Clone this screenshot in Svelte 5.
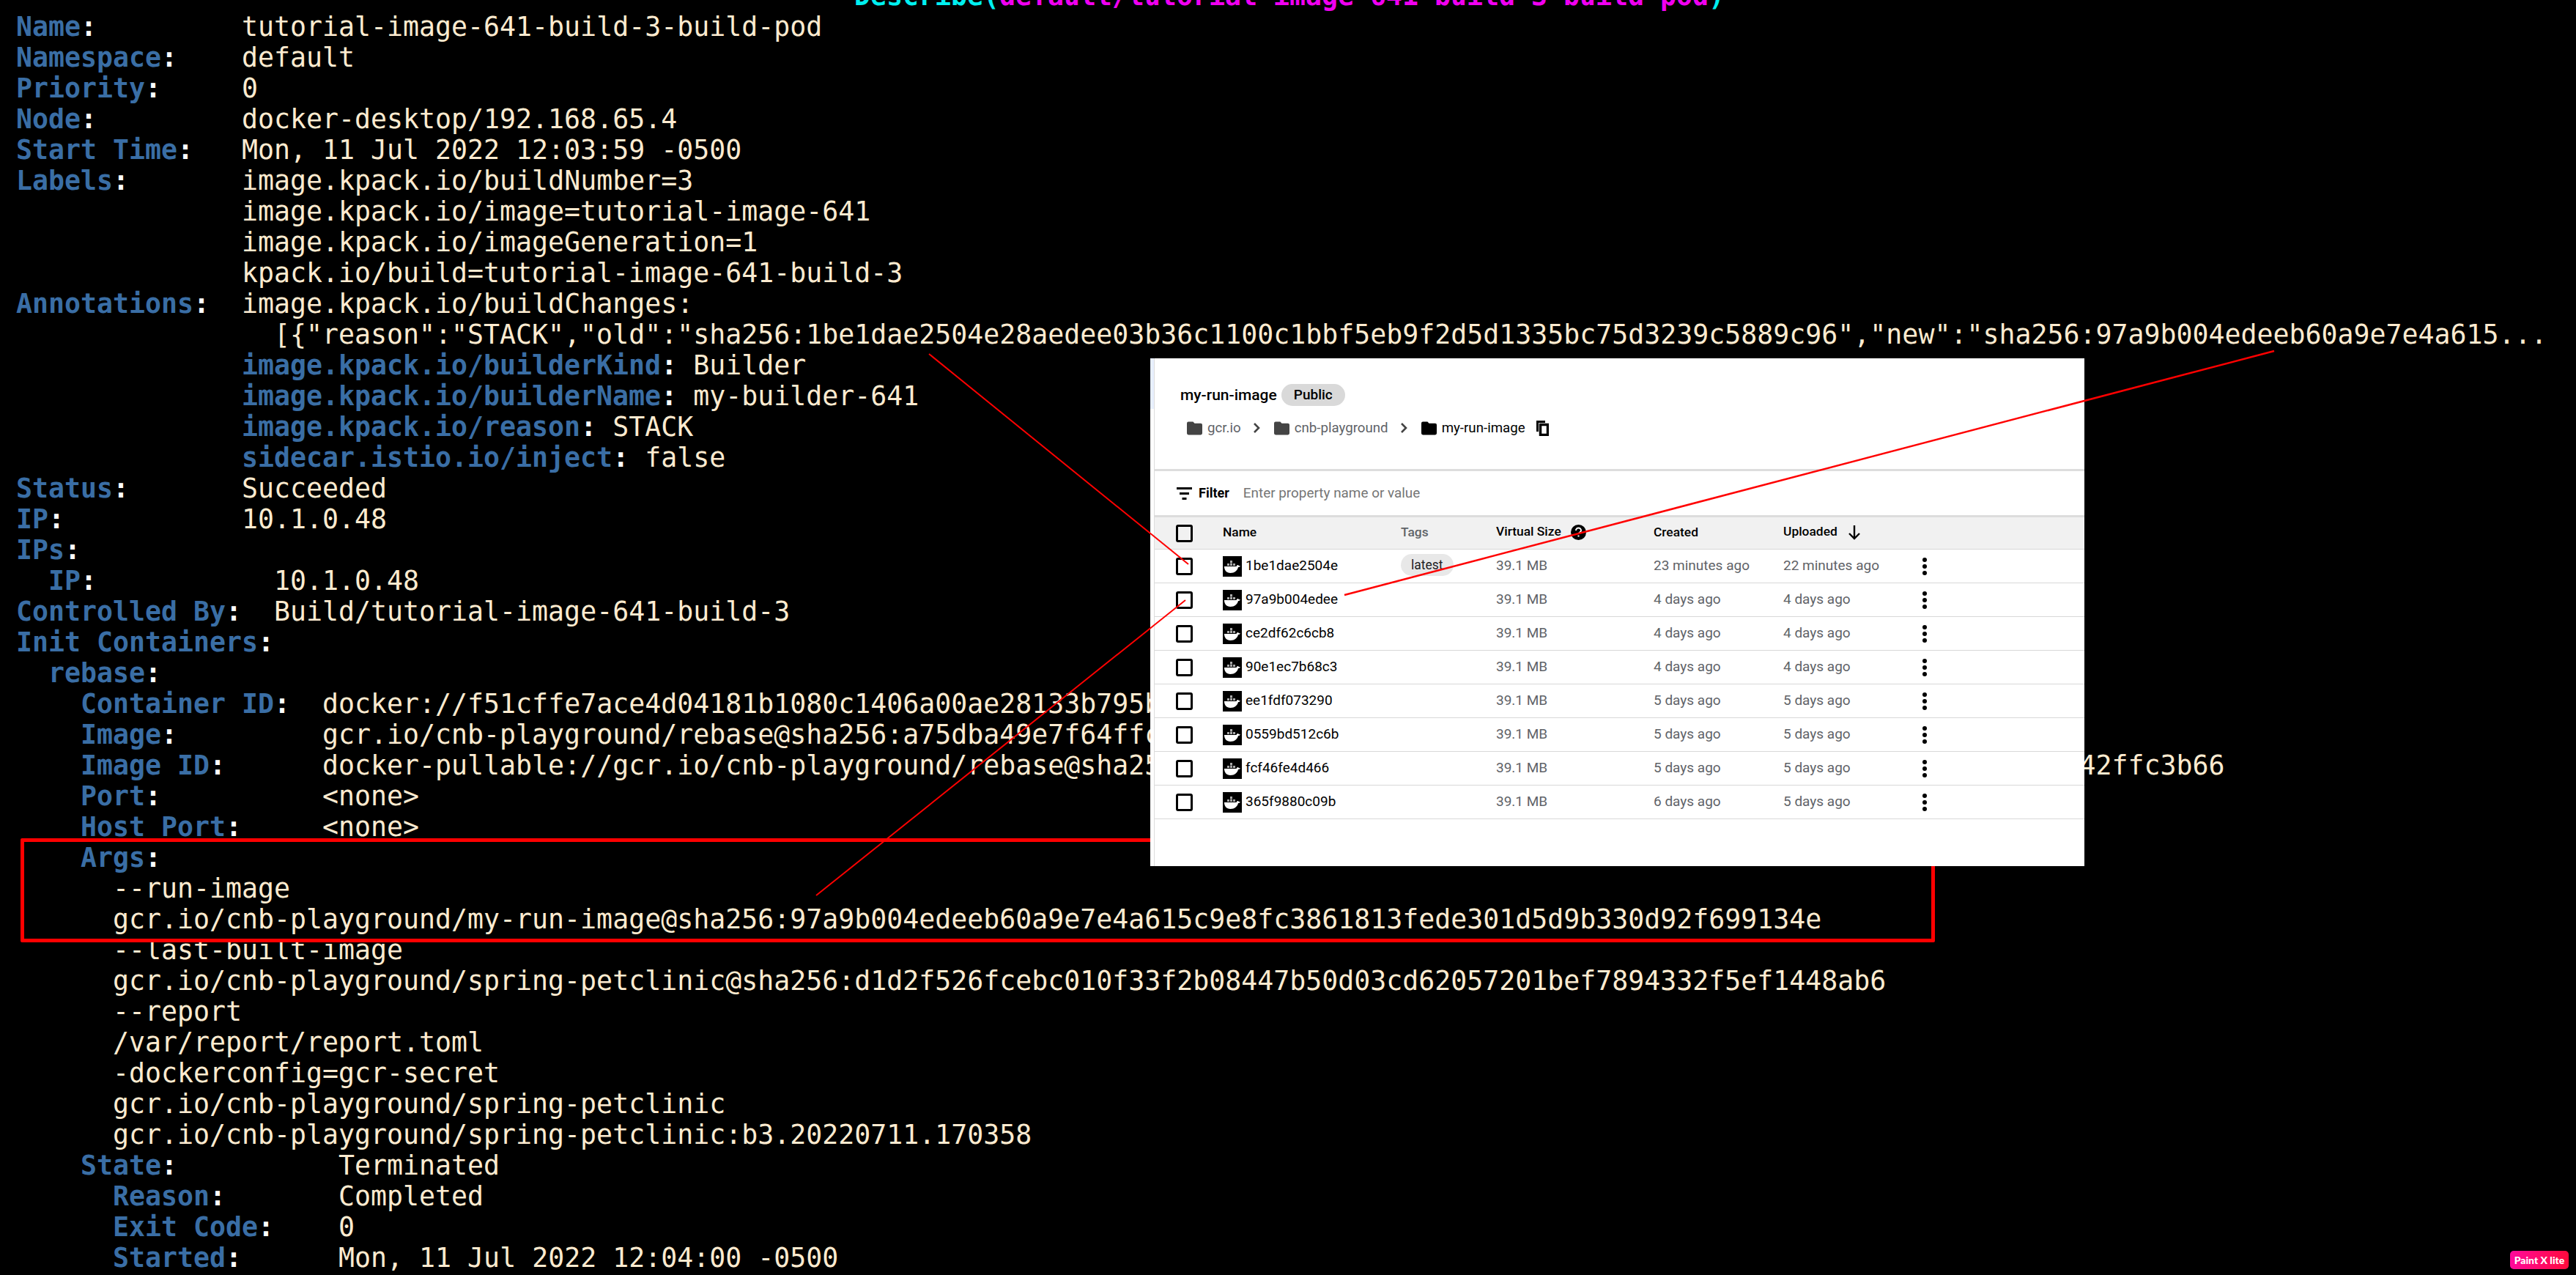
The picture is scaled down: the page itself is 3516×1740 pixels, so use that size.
<script>
  const pad = (n) => ' '.repeat(n);

  // key is drawn blue, the rest in the terminal foreground
  const lines = [
    { key: 'Name', rest: '         tutorial-image-641-build-3-build-pod' },
    { key: 'Namespace', rest: '    default' },
    { key: 'Priority', rest: '     0' },
    { key: 'Node', rest: '         docker-desktop/192.168.65.4' },
    { key: 'Start Time', rest: '   Mon, 11 Jul 2022 12:03:59 -0500' },
    { key: 'Labels', rest: '       image.kpack.io/buildNumber=3' },
    { pre: pad(14), rest: 'image.kpack.io/image=tutorial-image-641' },
    { pre: pad(14), rest: 'image.kpack.io/imageGeneration=1' },
    { pre: pad(14), rest: 'kpack.io/build=tutorial-image-641-build-3' },
    { key: 'Annotations', rest: '  image.kpack.io/buildChanges:' },
    { pre: pad(16), rest: '[{"reason":"STACK","old":"sha256:1be1dae2504e28aedee03b36c1100c1bbf5eb9f2d5d1335bc75d3239c5889c96","new":"sha256:97a9b004edeeb60a9e7e4a615...' },
    { pre: pad(14), key: 'image.kpack.io/builderKind', rest: ' Builder' },
    { pre: pad(14), key: 'image.kpack.io/builderName', rest: ' my-builder-641' },
    { pre: pad(14), key: 'image.kpack.io/reason', rest: ' STACK' },
    { pre: pad(14), key: 'sidecar.istio.io/inject', rest: ' false' },
    { key: 'Status', rest: '       Succeeded' },
    { key: 'IP', rest: '           10.1.0.48' },
    { key: 'IPs', rest: '' },
    { pre: pad(2), key: 'IP', rest: '           10.1.0.48' },
    { key: 'Controlled By', rest: '  Build/tutorial-image-641-build-3' },
    { key: 'Init Containers', rest: '' },
    { pre: pad(2), key: 'rebase', rest: '' },
    { pre: pad(4), key: 'Container ID', rest: '  docker://f51cffe7ace4d04181b1080c1406a00ae28133b795b1c6f0a2d8e47b93c05d1e' },
    { pre: pad(4), key: 'Image', rest: '         gcr.io/cnb-playground/rebase@sha256:a75dba49e7f64ffc3b66d1a8f7e20c4942ffc3b66' },
    { pre: pad(4), key: 'Image ID', rest: '      docker-pullable://gcr.io/cnb-playground/rebase@sha256:a75dba49e7f64ffc0d93b1e7a6c25f8e04d7b31c9a68e1f5d2c7b4042ffc3b66' },
    { pre: pad(4), key: 'Port', rest: '          <none>' },
    { pre: pad(4), key: 'Host Port', rest: '     <none>' },
    { pre: pad(4), key: 'Args', rest: '' },
    { pre: pad(6), rest: '--run-image' },
    { pre: pad(6), rest: 'gcr.io/cnb-playground/my-run-image@sha256:97a9b004edeeb60a9e7e4a615c9e8fc3861813fede301d5d9b330d92f699134e' },
    { pre: pad(6), rest: '--last-built-image' },
    { pre: pad(6), rest: 'gcr.io/cnb-playground/spring-petclinic@sha256:d1d2f526fcebc010f33f2b08447b50d03cd62057201bef7894332f5ef1448ab6' },
    { pre: pad(6), rest: '--report' },
    { pre: pad(6), rest: '/var/report/report.toml' },
    { pre: pad(6), rest: '-dockerconfig=gcr-secret' },
    { pre: pad(6), rest: 'gcr.io/cnb-playground/spring-petclinic' },
    { pre: pad(6), rest: 'gcr.io/cnb-playground/spring-petclinic:b3.20220711.170358' },
    { pre: pad(4), key: 'State', rest: '          Terminated' },
    { pre: pad(6), key: 'Reason', rest: '       Completed' },
    { pre: pad(6), key: 'Exit Code', rest: '    0' },
    { pre: pad(6), key: 'Started', rest: '      Mon, 11 Jul 2022 12:04:00 -0500' }
  ];

  const images = [
    { name: '1be1dae2504e', tag: 'latest', created: '23 minutes ago', uploaded: '22 minutes ago' },
    { name: '97a9b004edee', created: '4 days ago', uploaded: '4 days ago' },
    { name: 'ce2df62c6cb8', created: '4 days ago', uploaded: '4 days ago' },
    { name: '90e1ec7b68c3', created: '4 days ago', uploaded: '4 days ago' },
    { name: 'ee1fdf073290', created: '5 days ago', uploaded: '5 days ago' },
    { name: '0559bd512c6b', created: '5 days ago', uploaded: '5 days ago' },
    { name: 'fcf46fe4d466', created: '5 days ago', uploaded: '5 days ago' },
    { name: '365f9880c09b', created: '6 days ago', uploaded: '5 days ago' }
  ];

  const folder = 'M2 5a2 2 0 0 1 2-2h6l2 2h8a2 2 0 0 1 2 2v11a2 2 0 0 1-2 2H4a2 2 0 0 1-2-2z';
</script>

<div class="screen">
  <div class="terminal">
    <div class="title"><span class="cyan">Describe(</span><span class="magenta">default/tutorial-image-641-build-3-build-pod</span><span class="cyan">)</span></div>
    {#each lines as line}
      <div class="line">{line.pre ?? ''}{#if line.key}<span class="key">{line.key}</span><span class="colon">:</span>{/if}{line.rest}</div>
    {/each}
  </div>

  <div class="callout"></div>

  <div class="panel">
    <div class="heading">
      <span class="repo">my-run-image</span>
      <span class="public">Public</span>
    </div>
    <div class="crumbs">
      <svg class="folder" viewBox="2 3 20 17"><path d={folder} fill="#444" /></svg>
      <span class="crumb">gcr.io</span>
      <svg class="chev" viewBox="0 0 10 14"><path d="M2 1l6 6-6 6" fill="none" stroke="#444" stroke-width="2.6" /></svg>
      <svg class="folder" viewBox="2 3 20 17"><path d={folder} fill="#444" /></svg>
      <span class="crumb">cnb-playground</span>
      <svg class="chev" viewBox="0 0 10 14"><path d="M2 1l6 6-6 6" fill="none" stroke="#444" stroke-width="2.6" /></svg>
      <svg class="folder" viewBox="2 3 20 17"><path d={folder} fill="#000" /></svg>
      <span class="crumb current">my-run-image</span>
      <svg class="copy" viewBox="0 0 17 21">
        <path d="M1.500 15V1.500H12" fill="none" stroke="#000" stroke-width="3" />
        <rect x="5.500" y="5.500" width="10" height="14" fill="none" stroke="#000" stroke-width="3.500" />
      </svg>
    </div>
    <div class="filter">
      <svg class="lines" viewBox="0 0 21 17">
        <path d="M0 1.500h21M4 8.500h13M7.500 15.500h6" stroke="#000" stroke-width="3" />
      </svg>
      <span class="filter-label">Filter</span>
      <span class="placeholder">Enter property name or value</span>
    </div>
    <div class="row head">
      <span class="box"></span>
      <span class="c-name">Name</span>
      <span class="c-tags muted">Tags</span>
      <span class="c-size">Virtual Size
        <svg class="help" viewBox="0 0 21 21">
          <circle cx="10.500" cy="10.500" r="10.500" fill="#000" />
          <path d="M7 8a3.500 3.500 0 0 1 7 0c0 2.500-3.500 2.500-3.500 5" fill="none" stroke="#fff" stroke-width="2" />
          <rect x="9.500" y="14.500" width="2" height="2" fill="#fff" />
        </svg>
      </span>
      <span class="c-date">Created</span>
      <span class="c-up">Uploaded
        <svg class="sort" viewBox="0 0 18 20">
          <path d="M9 0v18M2 11l7 7 7-7" fill="none" stroke="#000" stroke-width="2.400" />
        </svg>
      </span>
    </div>
    {#each images as image}
      <div class="row">
        <span class="box"></span>
        <span class="c-name name">
          <svg class="whale" viewBox="0 0 26 28">
            <rect width="26" height="28" fill="#000" />
            <path d="M2 14h16.500c.5-1.500 1.500-2.200 2.500-2 .3 1 1.500 1.300 3 1.200-.5 1.300-1.700 1.800-3 1.800C20 19.500 16 23 10.500 23 5 23 2 19 2 14z" fill="#fff" />
            <path d="M6 10h3v3H6zM10 10h3v3h-3zM14 10h3v3h-3zM10 6h3v3.400h-3z" fill="#aaa" />
          </svg>
          {image.name}
        </span>
        <span class="c-tags">
          {#if image.tag}<span class="tag">{image.tag}</span>{/if}
        </span>
        <span class="c-size muted">39.1 MB</span>
        <span class="c-date muted">{image.created}</span>
        <span class="c-up muted">{image.uploaded}</span>
        <span class="dots"><i></i><i></i><i></i></span>
      </div>
    {/each}
  </div>

  <svg class="arrows" viewBox="0 0 3516 1740">
    <line x1="1268" y1="483" x2="1622" y2="770" stroke-width="2" />
    <line x1="1835" y1="812" x2="3104" y2="479" stroke-width="2.500" />
    <line x1="1114" y1="1222" x2="1618" y2="819" stroke-width="2" />
  </svg>

  <div class="badge">Paint X lite</div>
</div>

<style>
  :global(body) {
    background: #000;
  }

  .screen {
    position: relative;
    width: 3516px;
    height: 1740px;
    overflow: hidden;
    background: #000;
  }

  .terminal {
    margin-top: -26px;
    padding-left: 22px;
    font-family: "DejaVu Sans Mono", monospace;
    font-size: 36.55px;
    line-height: 42px;
    color: #fdebd0;
  }

  .line {
    white-space: pre;
    height: 42px;
  }

  .key {
    color: #3a6ea5;
    font-weight: 700;
  }

  .colon {
    color: #fff;
    font-weight: 700;
  }

  .title {
    text-align: center;
    height: 42px;
    padding-right: 18px;
    font-weight: 700;
    white-space: pre;
  }

  .cyan { color: #00f0f0; }
  .magenta { color: #f000f0; }

  .callout {
    position: absolute;
    left: 28px;
    top: 1144px;
    width: 2613px;
    height: 142px;
    box-sizing: border-box;
    border: 5px solid #f00;
    border-radius: 2px;
  }

  .panel {
    position: absolute;
    left: 1570px;
    top: 489px;
    width: 1275px;
    height: 693px;
    background: #fff;
    font-family: Roboto, sans-serif;
    color: #000;
  }

  .panel::before {
    content: "";
    position: absolute;
    left: 5px;
    top: 0;
    bottom: 0;
    width: 1px;
    background: #ddd;
  }

  .panel::after {
    content: "";
    position: absolute;
    left: 0;
    top: 0;
    width: 5px;
    height: 69px;
    background: #e8f0fe;
  }

  .heading {
    display: flex;
    align-items: center;
    gap: 6px;
    height: 30px;
    padding: 35px 0 0 41px;
  }

  .repo {
    font-size: 21px;
    font-weight: 500;
  }

  .public {
    background: #d9d9d9;
    border-radius: 15px;
    padding: 0 17px;
    height: 30px;
    line-height: 30px;
    font-size: 19px;
    font-weight: 500;
  }

  .crumbs {
    display: flex;
    align-items: center;
    height: 30px;
    margin-top: 15px;
    padding-left: 50px;
    font-size: 18.7px;
    color: #5f6368;
  }

  .folder {
    width: 21px;
    height: 19px;
    margin-right: 7px;
  }

  .chev {
    width: 10px;
    height: 14px;
    margin: 0 19px 0 16px;
  }

  .current {
    color: #000;
  }

  .copy {
    width: 17px;
    height: 21px;
    margin-left: 15px;
  }

  .filter {
    display: flex;
    align-items: center;
    margin-top: 41px;
    margin-left: 6px;
    height: 60px;
    padding-left: 30px;
    border-top: 3px solid #ddd;
    font-size: 18px;
  }

  .lines {
    width: 21px;
    height: 17px;
    margin-right: 9px;
  }

  .filter-label {
    font-weight: 700;
    margin-right: 19px;
    margin-top: -1px;
  }

  .placeholder {
    color: #757575;
    font-size: 18.9px;
    margin-top: -1px;
  }

  .row {
    display: flex;
    align-items: center;
    position: relative;
    height: 45px;
    margin-left: 6px;
    border-bottom: 1px solid #d8d8d8;
    font-size: 19px;
  }

  .head {
    height: 43px;
    background: #f1f1f1;
    border-top: 3px solid #ddd;
    font-weight: 500;
    font-size: 17.4px;
  }

  .box {
    position: absolute;
    left: 29px;
    width: 23px;
    height: 24px;
    box-sizing: border-box;
    border: 3.500px solid #000;
    border-radius: 3px;
    background: transparent;
  }

  .row > span:not(.box):not(.dots) {
    position: absolute;
    margin-top: -3px;
  }

  .c-name { left: 93px; }
  .c-tags { left: 336px; }
  .c-size { left: 466px; }
  .c-date { left: 681px; }
  .c-up { left: 858px; }

  .name {
    display: flex;
    align-items: center;
    gap: 5px;
  }

  .whale {
    width: 26px;
    height: 28px;
    margin-top: 3px;
    flex: none;
  }

  .tag {
    display: block;
    background: #e8e8e8;
    border-radius: 15px;
    height: 30px;
    line-height: 30px;
    padding: 0 14px;
    color: #202124;
    font-size: 17.5px;
  }

  .muted {
    color: #5f6368;
  }

  .help {
    width: 21px;
    height: 21px;
    margin-left: 9px;
    vertical-align: middle;
  }

  .sort {
    width: 18px;
    height: 20px;
    margin-left: 10px;
    vertical-align: middle;
  }

  .dots {
    position: absolute;
    left: 1048px;
    display: flex;
    flex-direction: column;
    gap: 3px;
  }

  .dots i {
    display: block;
    width: 6px;
    height: 6px;
    border-radius: 50%;
    background: #000;
  }

  .arrows {
    position: absolute;
    inset: 0;
    width: 3516px;
    height: 1740px;
    stroke: #f00;
    pointer-events: none;
  }

  .badge {
    position: absolute;
    left: 3426px;
    top: 1707px;
    width: 80px;
    height: 25px;
    border-radius: 5px;
    background: linear-gradient(90deg, #ff0a9c, #ff0a3c);
    color: #fff;
    font-family: Lato, sans-serif;
    font-weight: 900;
    font-size: 14px;
    line-height: 25px;
    text-align: center;
  }
</style>
